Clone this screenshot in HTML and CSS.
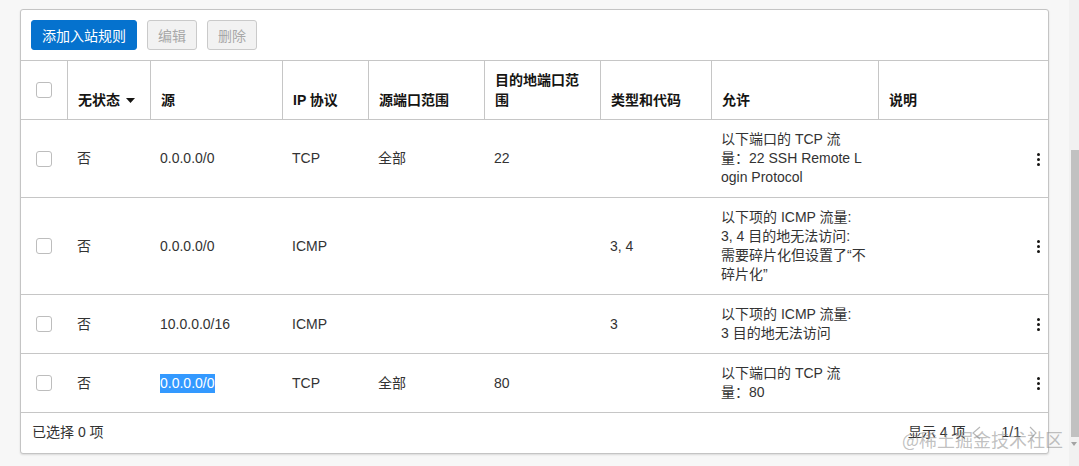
FILE: index.html
```html
<!DOCTYPE html>
<html lang="zh-CN">
<head>
<meta charset="utf-8">
<title>入站规则</title>
<link rel="stylesheet" href="styles.css">
</head>
<body>
<div class="page">
  <div class="panel">
    <div class="toolbar">
      <button class="btn btn-primary" type="button">添加入站规则</button>
      <button class="btn" type="button" disabled>编辑</button>
      <button class="btn" type="button" disabled>删除</button>
    </div>
    <table class="rules">
      <colgroup>
        <col class="w0"><col class="w1"><col class="w2"><col class="w3"><col class="w4"><col class="w5"><col class="w6"><col class="w7"><col class="w8">
      </colgroup>
      <thead>
        <tr>
          <th class="cb-cell"><span class="cb"></span></th>
          <th>无状态<svg class="caret" width="9" height="5" viewBox="0 0 9 5"><path d="M0 0H9L4.5 5Z" fill="#161513"/></svg></th>
          <th>源</th>
          <th>IP 协议</th>
          <th>源端口范围</th>
          <th>目的地端口范围</th>
          <th>类型和代码</th>
          <th>允许</th>
          <th>说明</th>
        </tr>
      </thead>
      <tbody>
        <tr>
          <td class="cb-cell"><span class="cb"></span></td>
          <td>否</td>
          <td>0.0.0.0/0</td>
          <td>TCP</td>
          <td>全部</td>
          <td>22</td>
          <td></td>
          <td>以下端口的 TCP 流<br>量：22 SSH Remote L<br>ogin Protocol</td>
          <td class="act"><svg class="kebab" width="3" height="13" viewBox="0 0 3 13"><circle cx="1.5" cy="1.5" r="1.5"/><circle cx="1.5" cy="6.5" r="1.5"/><circle cx="1.5" cy="11.5" r="1.5"/></svg></td>
        </tr>
        <tr>
          <td class="cb-cell"><span class="cb"></span></td>
          <td>否</td>
          <td>0.0.0.0/0</td>
          <td>ICMP</td>
          <td></td>
          <td></td>
          <td>3, 4</td>
          <td>以下项的 ICMP 流量:<br>3, 4 目的地无法访问:<br>需要碎片化但设置了“不<br>碎片化”</td>
          <td class="act"><svg class="kebab" width="3" height="13" viewBox="0 0 3 13"><circle cx="1.5" cy="1.5" r="1.5"/><circle cx="1.5" cy="6.5" r="1.5"/><circle cx="1.5" cy="11.5" r="1.5"/></svg></td>
        </tr>
        <tr>
          <td class="cb-cell"><span class="cb"></span></td>
          <td>否</td>
          <td>10.0.0.0/16</td>
          <td>ICMP</td>
          <td></td>
          <td></td>
          <td>3</td>
          <td>以下项的 ICMP 流量:<br>3 目的地无法访问</td>
          <td class="act"><svg class="kebab" width="3" height="13" viewBox="0 0 3 13"><circle cx="1.5" cy="1.5" r="1.5"/><circle cx="1.5" cy="6.5" r="1.5"/><circle cx="1.5" cy="11.5" r="1.5"/></svg></td>
        </tr>
        <tr>
          <td class="cb-cell"><span class="cb"></span></td>
          <td>否</td>
          <td><span class="sel">0.0.0.0/0</span></td>
          <td>TCP</td>
          <td>全部</td>
          <td>80</td>
          <td></td>
          <td>以下端口的 TCP 流<br>量：80</td>
          <td class="act"><svg class="kebab" width="3" height="13" viewBox="0 0 3 13"><circle cx="1.5" cy="1.5" r="1.5"/><circle cx="1.5" cy="6.5" r="1.5"/><circle cx="1.5" cy="11.5" r="1.5"/></svg></td>
        </tr>
      </tbody>
    </table>
    <div class="footer">
      <span>已选择 0 项</span>
      <div class="pager">
        <span>显示 4 项</span>
        <svg class="chev prev" width="10" height="14" viewBox="0 0 10 14"><path d="M9 1L2 7L9 13" fill="none" stroke="#b8b8b8" stroke-width="1.2"/></svg>
        <span class="pg">1/1</span>
        <svg class="chev next" width="8" height="14" viewBox="0 0 8 14"><path d="M1 1L7 7L1 13" fill="none" stroke="#b8b8b8" stroke-width="1.2"/></svg>
      </div>
    </div>
  </div>
</div>
<div class="scrollbar">
  <div class="thumb"></div>
  <svg class="arrow" width="6" height="4" viewBox="0 0 6 4"><path d="M0 0H6L3 4Z" fill="#a3a3a3"/></svg>
</div>
<div class="watermark">@稀土掘金技术社区</div>
</body>
</html>
```
FILE: styles.css
```css
html, body {
  margin: 0;
  height: 100%;
}
body {
  display: flex;
  background: #f7f7f7;
  font-family: "Liberation Sans", "Noto Sans CJK SC", sans-serif;
  font-size: 14px;
  color: #333;
  overflow: hidden;
  position: relative;
}
.page {
  flex: 1;
  padding: 9px 20px 0;
}
.panel {
  background: #fff;
  border: 1px solid #c4c4c4;
  border-radius: 3px;
  box-shadow: 0 1px 2px rgba(0, 0, 0, 0.12);
}
.toolbar {
  display: flex;
  gap: 10px;
  padding: 10px;
  border-bottom: 1px solid #c6c6c6;
}
.btn {
  height: 30px;
  padding: 0 10px;
  border: 1px solid #cacaca;
  border-radius: 3px;
  background: #f2f2f2;
  color: #a8a8a8;
  font: 14px "Liberation Sans", "Noto Sans CJK SC", sans-serif;
}
.btn-primary {
  background: #0572ce;
  border-color: #0572ce;
  color: #fff;
}
.rules {
  width: 1027px;
  table-layout: fixed;
  border-collapse: separate;
  border-spacing: 0;
}
.w0 { width: 46px; }
.w1 { width: 83px; }
.w2 { width: 132px; }
.w3 { width: 86px; }
.w4 { width: 116px; }
.w5 { width: 116px; }
.w6 { width: 111px; }
.w7 { width: 167px; }
.w8 { width: 170px; }
th {
  height: 49px;
  padding: 0 10px 9px;
  text-align: left;
  vertical-align: bottom;
  font-weight: bold;
  color: #161513;
  line-height: 20px;
  border-left: 1px solid #c6c6c6;
  border-bottom: 1px solid #c6c6c6;
}
th.cb-cell {
  border-left: 0;
  padding: 0 0 0 15px;
  vertical-align: middle;
}
.caret {
  margin-left: 6px;
  vertical-align: 2px;
}
td {
  padding: 10px;
  line-height: 19px;
  vertical-align: middle;
  border-bottom: 1px solid #c6c6c6;
  word-break: break-all;
}
td.cb-cell {
  padding: 0 0 0 15px;
}
.cb {
  display: block;
  width: 14px;
  height: 14px;
  border: 1px solid #bdbdbd;
  border-radius: 3px;
  background: #fff;
}
td.act {
  text-align: right;
  padding-right: 8px;
}
.kebab {
  fill: #161513;
  display: inline-block;
  vertical-align: middle;
}
.sel {
  display: inline-block;
  background: #3399ff;
  color: #fff;
  line-height: 19px;
}
.footer {
  display: flex;
  justify-content: space-between;
  align-items: center;
  padding: 10px 11px 11px;
  line-height: 19px;
}
.pager {
  display: flex;
  align-items: center;
}
.chev.prev { margin-left: 5px; }
.pg { margin-left: 21px; margin-right: 8px; }
.scrollbar {
  width: 10px;
  height: 100%;
  background: #f1f1f1;
  display: flex;
  flex-direction: column;
  align-items: flex-end;
  padding-top: 150px;
  box-sizing: border-box;
}
.thumb {
  width: 8px;
  height: 287px;
  background: #c1c1c1;
}
.arrow {
  margin: 5px 2px 0 0;
}
.watermark {
  position: absolute;
  right: 16px;
  top: 430px;
  font-family: "Noto Sans CJK SC", sans-serif;
  font-size: 18px;
  line-height: 18px;
  color: rgba(140, 140, 140, 0.55);
  pointer-events: none;
}
```
